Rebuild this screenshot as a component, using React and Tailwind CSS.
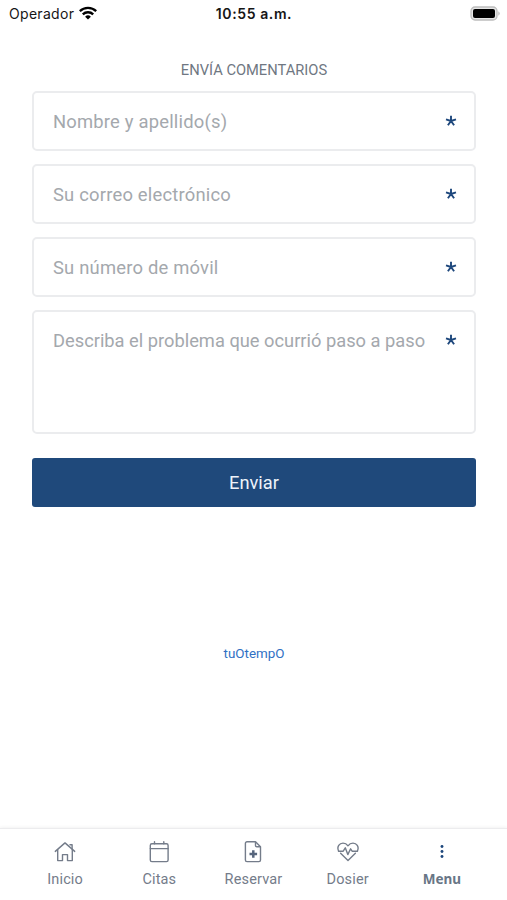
import React, { useState } from 'react';

const fields = [
  { name: 'fullName', type: 'text', placeholder: 'Nombre y apellido(s)' },
  { name: 'email', type: 'email', placeholder: 'Su correo electrónico' },
  { name: 'phone', type: 'tel', placeholder: 'Su número de móvil' },
];

const StatusBar = () => (
  <div className="h-[26px] grid grid-cols-3 items-center pl-[9px] pr-[6px] text-[#161616] font-['Inter',sans-serif]">
    <div className="flex items-center gap-[5px]">
      <span className="text-[14px] tracking-[0.3px]">Operador</span>
      <svg width="18" height="14" viewBox="0 0 18 14" fill="none" stroke="#000" strokeWidth="2.3">
        <path d="M0.8 5.2a11.8 11.8 0 0 1 16.4 0" />
        <path d="M3.8 8.4a7.4 7.4 0 0 1 10.4 0" />
        <path d="M9 13.6L6.1 10.7a4.1 4.1 0 0 1 5.8 0z" fill="#000" stroke="none" />
      </svg>
    </div>
    <span className="-ml-[2px] text-center text-[14px] font-semibold tracking-[0.6px] whitespace-nowrap">10:55 a.m.</span>
    <svg className="justify-self-end" width="31" height="15" viewBox="0 0 31 15">
      <rect x="1" y="1" width="26" height="13" rx="4" fill="#e6e6e6" stroke="#bdbdbd" strokeWidth="1.3" />
      <rect x="3" y="3" width="22" height="9" rx="2" fill="#000" />
      <path d="M28.4 5.3a2.6 2.6 0 0 1 0 4.4z" fill="#b5b5b5" />
    </svg>
  </div>
);

const Required = () => (
  <svg className="shrink-0" width="12" height="12" viewBox="0 0 12 12" stroke="#1d477c" strokeWidth="1.9">
    <path d="M6 6V0.8M6 6L1 4.4M6 6L11 4.4M6 6L2.9 10.3M6 6L9.1 10.3" />
  </svg>
);

const HomeIcon = () => (
  <svg width="22" height="22" viewBox="0 0 22 22" fill="none" stroke="currentColor" strokeWidth="1.4" strokeLinecap="round" strokeLinejoin="round">
    <path d="M1.3 10.4L11 1.9l9.7 8.5" />
    <path d="M3.7 8.6v11h4.8v-6h5v6h4.8v-11" />
    <path d="M16 3.7h2.1v4" />
  </svg>
);

const CalendarIcon = () => (
  <svg width="22" height="22" viewBox="0 0 22 22" fill="none" stroke="currentColor" strokeWidth="1.4" strokeLinecap="round">
    <rect x="2.3" y="2.8" width="17.8" height="17.8" rx="1.6" />
    <path d="M2.3 7.6h17.8M6.5 0.8v2M15.8 0.8v2" />
  </svg>
);

const FileIcon = () => (
  <svg width="22" height="22" viewBox="0 0 22 22" fill="none" stroke="currentColor" strokeWidth="1.4" strokeLinejoin="round">
    <path d="M5 0.8h8.5l5 5v13.2a1.6 1.6 0 0 1-1.6 1.6H5a1.6 1.6 0 0 1-1.6-1.6V2.4A1.6 1.6 0 0 1 5 0.8z" />
    <path d="M13.5 0.8v3.7a1.3 1.3 0 0 0 1.3 1.3h3.7" />
    <path d="M11.3 9.2v7.6M7.5 13h7.6" stroke="#56657c" strokeWidth="2.5" />
  </svg>
);

const HeartIcon = () => (
  <svg width="22" height="22" viewBox="0 0 22 22" fill="none" stroke="currentColor" strokeWidth="1.4" strokeLinecap="round" strokeLinejoin="round">
    <path d="M1.4 9.6C-0.2 5.6 2.3 2.1 6 2.1c2.3 0 3.8 1 5 2.7 1.200-1.700 2.700-2.700 5-2.700 3.700 0 6.200 3.500 4.600 7.500" />
    <path d="M3.6 12.200L11 19.500l7.400-7.300" />
    <path d="M1.500 10.200h4.700L8.300 6.800l2.500 6.800 2.800-5.800 1.500 2.400h5.400" />
  </svg>
);

const MenuIcon = () => (
  <svg width="22" height="22" viewBox="0 0 22 22" fill="#1d477c">
    <circle cx="11" cy="5.500" r="1.450" />
    <circle cx="11" cy="10.500" r="1.450" />
    <circle cx="11" cy="15.500" r="1.450" />
  </svg>
);

const tabs = [
  { label: 'Inicio', icon: HomeIcon },
  { label: 'Citas', icon: CalendarIcon },
  { label: 'Reservar', icon: FileIcon },
  { label: 'Dosier', icon: HeartIcon },
  { label: 'Menu', icon: MenuIcon, active: true },
];

const App = () => {
  const [form, setForm] = useState({ fullName: '', email: '', phone: '', problem: '' });

  const handleChange = (e) => setForm({ ...form, [e.target.name]: e.target.value });

  return (
    <div className="h-[900px] flex flex-col bg-white overflow-hidden font-['Roboto',sans-serif]">
      <StatusBar />

      <main className="flex-1 pl-8 pr-[31px] pt-[34px]">
        <h1 className="h-[21px] leading-[21px] text-center text-[14.700px] text-[#6f7782]">ENVÍA COMENTARIOS</h1>

        <form className="mt-[10px]" onSubmit={(e) => e.preventDefault()}>
          <div className="flex flex-col gap-[13px]">
            {fields.map(f => (
              <label key={f.name} className="h-[60px] flex items-center pl-[19px] pr-[17px] border-2 border-[#ebecee] rounded-[5px]">
                <input
                  name={f.name}
                  type={f.type}
                  value={form[f.name]}
                  onChange={handleChange}
                  placeholder={f.placeholder}
                  className="flex-1 min-w-0 pt-px outline-none text-[18.400px] tracking-[0.2px] placeholder:text-[#a4a8ad]"
                />
                <Required />
              </label>
            ))}
            <label className="h-[124px] flex items-start pt-[17px] pl-[19px] pr-[17px] border-2 border-[#ebecee] rounded-[5px]">
              <textarea
                name="problem"
                value={form.problem}
                onChange={handleChange}
                placeholder="Describa el problema que ocurrió paso a paso"
                className="flex-1 min-w-0 h-[90px] resize-none outline-none text-[18.300px] leading-6 whitespace-nowrap overflow-hidden placeholder:text-[#a4a8ad]"
              />
              <span className="pt-[5px]"><Required /></span>
            </label>
          </div>
          <button type="submit" className="mt-6 w-full h-[49px] rounded-[3px] bg-[#1f497b] text-[#eef3fa] text-[18.300px]">Enviar</button>
        </form>

        <p className="mt-[137px] text-center text-[13.400px] leading-5 text-[#2f70c4]">tuOtempO</p>
      </main>

      <nav className="h-[72px] grid grid-cols-5 px-[18px] pt-3 border-t border-[#ececee] shadow-[0_-1px_3px_rgba(0,0,0,0.05)]">
        {tabs.map(({ label, icon: Icon, active }) => (
          <a key={label} className="flex flex-col items-center gap-[7px] text-[#747c8a]">
            <Icon />
            <span className={active ? "-mt-px font-['Noto_Sans',sans-serif] font-bold text-[13.500px] leading-5 text-[#687686]" : 'text-[14.500px] leading-5 tracking-[0.15px]'}>{label}</span>
          </a>
        ))}
      </nav>
    </div>
  );
};

export default App;
